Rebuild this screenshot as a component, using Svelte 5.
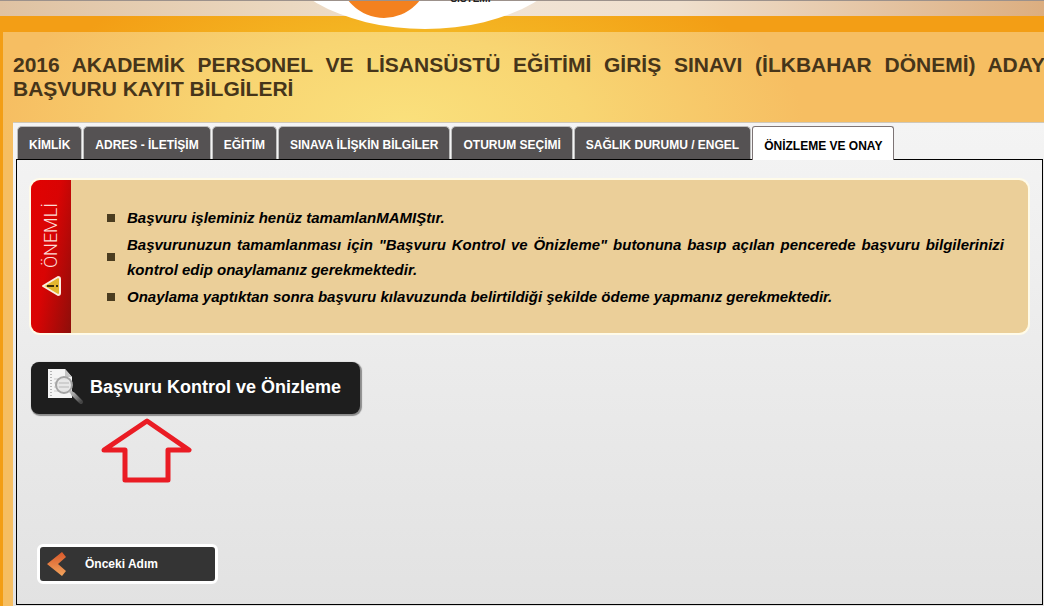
<script lang="ts">
interface Tab {
	readonly id: string;
	readonly label: string;
}

const tabs: readonly Tab[] = [
	{ id: 'kimlik', label: 'KİMLİK' },
	{ id: 'adres', label: 'ADRES - İLETİŞİM' },
	{ id: 'egitim', label: 'EĞİTİM' },
	{ id: 'sinav', label: 'SINAVA İLİŞKİN BİLGİLER' },
	{ id: 'oturum', label: 'OTURUM SEÇİMİ' },
	{ id: 'saglik', label: 'SAĞLIK DURUMU / ENGEL' },
	{ id: 'onay', label: 'ÖNİZLEME VE ONAY' },
];

const notes: readonly string[] = [
	'Başvuru işleminiz henüz tamamlanMAMIŞtır.',
	'Başvurunuzun tamamlanması için "Başvuru Kontrol ve Önizleme" butonuna basıp açılan pencerede başvuru bilgilerinizi kontrol edip onaylamanız gerekmektedir.',
	'Onaylama yaptıktan sonra başvuru kılavuzunda belirtildiği şekilde ödeme yapmanız gerekmektedir.',
];

let active = $state('onay');
</script>

<div class="page">
	<header class="banner">
		<div class="logo">
			<svg class="logo-shape" viewBox="0 0 308 30" width="308" height="30" aria-hidden="true">
				<ellipse cx="154" cy="-62" rx="154" ry="90" fill="#fff" />
				<circle cx="113" cy="-28" r="45" fill="#f4811f" />
			</svg>
			<span class="logo-text">SİSTEMİ</span>
		</div>
	</header>

	<main class="content">
		<h1 class="title">2016 AKADEMİK PERSONEL VE LİSANSÜSTÜ EĞİTİMİ GİRİŞ SINAVI (İLKBAHAR DÖNEMİ) ADAY BAŞVURU KAYIT BİLGİLERİ</h1>

		<div class="sheet">
			<div class="tabs" role="tablist">
				{#each tabs as tab (tab.id)}
					<button
						type="button"
						role="tab"
						class="tab"
						class:active={active === tab.id}
						aria-selected={active === tab.id}
						onclick={() => (active = tab.id)}
					>
						{tab.label}
					</button>
				{/each}
			</div>

			<section class="panel">
				<div class="notice">
					<div class="notice-label">
						<span class="notice-word">ÖNEMLİ</span>
						<svg width="22" height="24" viewBox="0 0 22 24" aria-hidden="true">
							<path d="M3 12 L18 3 Q20 3 20 5 V19 Q20 21 18 21 Z" fill="#e3b62e" stroke="#fbeee0" stroke-width="2" stroke-linejoin="round" />
							<path d="M7 12 H14 M16 12 H18" stroke="#3c2c08" stroke-width="2" />
						</svg>
					</div>
					<ul class="notes">
						{#each notes as note}
							<li>{note}</li>
						{/each}
					</ul>
				</div>

				<button type="button" class="preview">
					<svg width="38" height="38" viewBox="0 0 38 38" aria-hidden="true">
						<defs>
							<linearGradient id="handle" x1="0" y1="0" x2="1" y2="1">
								<stop offset="0" stop-color="#aaa" />
								<stop offset="1" stop-color="#444" />
							</linearGradient>
						</defs>
						<path d="M1 1 H18 L25 9 V30 H1 Z" fill="#f4f4f4" />
						<path d="M18 1 V9 H25 Z" fill="#c4c4c4" />
						<path d="M4 3 V29" stroke="#777" stroke-width="1" stroke-dasharray="1 2" />
						<path d="M7 11 H22 M7 15 H22 M7 19 H22 M7 23 H20" stroke="#ccc" />
						<circle cx="17" cy="17" r="8" fill="#e4e4e4" fill-opacity="0.8" stroke="#a4a4a4" stroke-width="2" />
						<path d="M12 15 H22 M12 19 H22" stroke="#bbb" />
						<path d="M23 23 L26 26" stroke="#bbb" stroke-width="3" />
						<path d="M26 26 L34 34" stroke="url(#handle)" stroke-width="4" stroke-linecap="round" />
					</svg>
					<span>Başvuru Kontrol ve Önizleme</span>
				</button>

				<svg class="pointer" width="92" height="66" viewBox="0 0 92 66" aria-hidden="true">
					<path d="M46 3 L88 32 H67 V62 H24 V32 H3 Z" fill="none" stroke="#ea1c24" stroke-width="5" stroke-linejoin="round" />
				</svg>

				<button type="button" class="previous">
					<svg width="20" height="24" viewBox="0 0 20 24" aria-hidden="true">
						<defs>
							<linearGradient id="chevron" x1="0" y1="0" x2="0" y2="1">
								<stop offset="0" stop-color="#d9582a" />
								<stop offset="1" stop-color="#f2a45c" />
							</linearGradient>
						</defs>
						<path d="M15 0 L19 5 L11 12 L19 19 L15 24 L0 12 Z" fill="url(#chevron)" />
					</svg>
					<span>Önceki Adım</span>
				</button>
			</section>
		</div>
	</main>
</div>

<style>
	:global(body) {
		margin: 0;
		background: #f39e15;
	}

	.page {
		min-height: 100vh;
		box-sizing: border-box;
		overflow: hidden;
		font-family: "Liberation Sans", Arial, sans-serif;
		background: radial-gradient(ellipse 380px 190px at 410px 130px, #f5cb30 0%, #f4b422 55%, #f39e15 100%);
	}

	.banner {
		height: 15px;
		border-top: 1px solid #9c918b;
		margin-bottom: 16px;
		background: linear-gradient(90deg, #dfc2a2 0%, #ead6bd 25%, #f1e4d6 45%, #efdfcd 65%, #dcae80 100%);
	}

	.logo {
		position: relative;
		width: 308px;
		margin-left: 26%;
	}

	.logo-shape {
		display: block;
	}

	.logo-text {
		position: absolute;
		left: 179px;
		top: -8px;
		font-size: 10px;
		line-height: 12px;
		font-weight: bold;
		color: #222;
	}

	.content {
		margin-left: 3px;
		padding: 21px 0 0 10px;
		background: radial-gradient(ellipse 400px 190px at 400px 90px, #fae07c 0%, #f8d572 45%, #f6be62 100%);
	}

	.title {
		margin: 0 -1px 21px 0;
		font-size: 21px;
		line-height: 24px;
		text-align: justify;
		color: #46351a;
	}

	.sheet {
		padding: 3px 1px 2px 3px;
		border-top: 1px solid #cfc8ba;
		background: linear-gradient(#f4f4f4, #e2e2e2);
	}

	.tabs {
		display: flex;
		align-items: flex-start;
		gap: 1px;
		padding-left: 1px;
	}

	.tab {
		flex: none;
		height: 33px;
		padding: 4px 11px 0;
		border: 1px solid #bdbdbd;
		border-bottom: 0;
		border-radius: 5px 5px 0 0;
		background: #555253;
		color: #fff;
		font: bold 12px/16px "Liberation Sans", Arial, sans-serif;
		white-space: nowrap;
		cursor: pointer;
	}

	.tab.active {
		height: 34px;
		margin-bottom: -1px;
		border-color: #7d7475;
		border-radius: 3px 3px 0 0;
		background: #fff;
		color: #000;
		z-index: 1;
	}

	.panel {
		display: flex;
		flex-direction: column;
		align-items: flex-start;
		padding: 20px 14px;
		border: 1px solid #000;
	}

	.notice {
		display: flex;
		align-self: stretch;
		min-height: 153px;
		box-shadow: 0 0 0 2px #fffbe9;
		border-radius: 9px;
		overflow: hidden;
		background: #ebcf99;
	}

	.notice-label {
		display: flex;
		flex: none;
		flex-direction: column;
		align-items: center;
		gap: 6px;
		width: 40px;
		padding-top: 23px;
		box-sizing: border-box;
		background: linear-gradient(100deg, #e20202 0%, #d90404 45%, #8d0e0a 100%);
	}

	.notice-word {
		writing-mode: vertical-rl;
		transform: rotate(180deg);
		font-family: Roboto, sans-serif;
		font-size: 18px;
		font-weight: 300;
		line-height: 24px;
		color: #fbdcd6;
	}

	.notes {
		display: flex;
		flex: 1;
		flex-direction: column;
		gap: 2px;
		margin: 0;
		padding: 25px 24px 22px 36px;
		list-style: none;
		font-size: 15px;
		line-height: 25px;
		font-weight: bold;
		font-style: italic;
		text-align: justify;
		color: #000;
	}

	.notes li {
		display: flex;
		align-items: center;
		gap: 12px;
	}

	.notes li::before {
		content: "";
		flex: none;
		width: 8px;
		height: 8px;
		background: #4b3d20;
	}

	.preview {
		display: flex;
		align-items: center;
		gap: 5px;
		height: 52px;
		margin-top: 29px;
		padding: 0 19px 2px 16px;
		border: 0;
		border-radius: 8px;
		box-shadow: 1px 1px 1px 1px #8c8c8c;
		background: #1e1e1e;
		color: #fff;
		font: bold 18px/24px "Liberation Sans", Arial, sans-serif;
		cursor: pointer;
	}

	.pointer {
		margin: 4px 0 0 70px;
	}

	.previous {
		display: flex;
		align-items: center;
		gap: 18px;
		width: 181px;
		height: 40px;
		margin: 60px 0 0 6px;
		padding: 0 7px;
		border: 3px solid #fff;
		border-radius: 6px;
		background: #343434;
		color: #fff;
		font: bold 12px/16px "Liberation Sans", Arial, sans-serif;
		cursor: pointer;
	}
</style>
